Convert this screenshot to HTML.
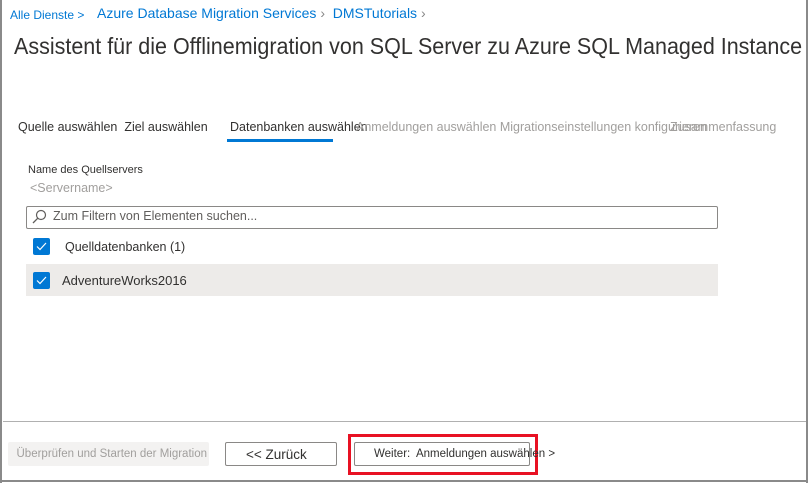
<!DOCTYPE html>
<html><head><style>
*{margin:0;padding:0;box-sizing:border-box}
body{width:810px;height:483px;background:#fff;font-family:"Liberation Sans",sans-serif;position:relative;overflow:hidden;color:#323130}
.a{position:absolute;white-space:nowrap}
.cb{position:absolute;width:17px;height:17px;background:#0078d4;border-radius:2px}
.cb svg{position:absolute;left:3px;top:4px}
</style></head><body>
<div class="a" style="left:0;top:0;width:2px;height:483px;background:#8a8a8a"></div>
<div class="a" style="left:806px;top:0;width:2px;height:483px;background:#8a8a8a"></div>
<div class="a" style="left:0;top:480px;width:808px;height:2px;background:#8a8a8a"></div>
<div class="a" style="left:10px;top:8px;font-size:12px;color:#0078d4">Alle Dienste &gt;</div>
<div class="a" style="left:97px;top:5px;font-size:14px;color:#0078d4">Azure Database Migration Services <span style="color:#888">&#x203A;</span>&nbsp;&nbsp;DMSTutorials <span style="color:#888">&#x203A;</span></div>
<div class="a" style="left:14px;top:33px;font-size:23.5px;color:#323130;transform:scaleX(0.915);transform-origin:left top">Assistent für die Offlinemigration von SQL Server zu Azure SQL Managed Instance</div>
<div class="a" style="left:18px;top:120px;font-size:12.5px;color:#323130">Quelle auswählen&nbsp; Ziel auswählen</div>
<div class="a" style="left:230px;top:120px;font-size:12.5px;color:#323130">Datenbanken auswählen</div>
<div class="a" style="left:356px;top:120px;font-size:12.5px;color:#a19f9d">Anmeldungen auswählen Migrationseinstellungen konfigurieren</div>
<div class="a" style="left:670px;top:120px;font-size:12.5px;color:#a19f9d">Zusammenfassung</div>
<div class="a" style="left:227px;top:139px;width:106px;height:3px;background:#0078d4"></div>
<div class="a" style="left:28px;top:164px;font-size:11px;color:#323130">Name des Quellservers</div>
<div class="a" style="left:30px;top:181px;font-size:12.5px;color:#a19f9d">&lt;Servername&gt;</div>
<div class="a" style="left:26px;top:206px;width:692px;height:23px;border:1px solid #8a8886;border-radius:2px"></div>
<svg class="a" style="left:31px;top:209px" width="16" height="16" viewBox="0 0 16 16"><circle cx="10" cy="6" r="4.5" fill="none" stroke="#605e5c" stroke-width="1.2"/><line x1="6.8" y1="9.2" x2="2" y2="14" stroke="#605e5c" stroke-width="1.3"/></svg>
<div class="a" style="left:53px;top:209px;font-size:12.5px;color:#605e5c">Zum Filtern von Elementen suchen...</div>
<div class="cb" style="left:33px;top:238px"><svg width="11" height="9" viewBox="0 0 11 9"><path d="M1 4.5L4 7.5L10 1" fill="none" stroke="#fff" stroke-width="1.2"/></svg></div>
<div class="a" style="left:65px;top:240px;font-size:12.5px;color:#323130">Quelldatenbanken (1)</div>
<div class="a" style="left:26px;top:264px;width:692px;height:32px;background:#edebe9"></div>
<div class="cb" style="left:33px;top:272px"><svg width="11" height="9" viewBox="0 0 11 9"><path d="M1 4.5L4 7.5L10 1" fill="none" stroke="#fff" stroke-width="1.2"/></svg></div>
<div class="a" style="left:62px;top:273px;font-size:13px;color:#323130">AdventureWorks2016</div>
<div class="a" style="left:3px;top:421px;width:803px;height:1px;background:#b0b0b0"></div>
<div class="a" style="left:8px;top:442px;width:201px;height:24px;background:#f3f2f1;border-radius:2px;font-size:11.5px;color:#a19f9d;line-height:24px;text-align:right;padding-right:2px">Überprüfen und Starten der Migration</div>
<div class="a" style="left:225px;top:442px;width:112px;height:24px;border:1px solid #8a8886;border-radius:2px;font-size:13.5px;line-height:24px;padding-left:20px;color:#323130">&lt;&lt; Zurück</div>
<div class="a" style="left:348px;top:434px;width:190px;height:41px;border:3px solid #e81123"></div>
<div class="a" style="left:354px;top:442px;width:176px;height:24px;border:1px solid #8a8886;border-radius:2px;font-size:11.5px;line-height:22px;padding-left:19px;color:#323130">Weiter:&nbsp; Anmeldungen auswählen &gt;</div>
</body></html>
